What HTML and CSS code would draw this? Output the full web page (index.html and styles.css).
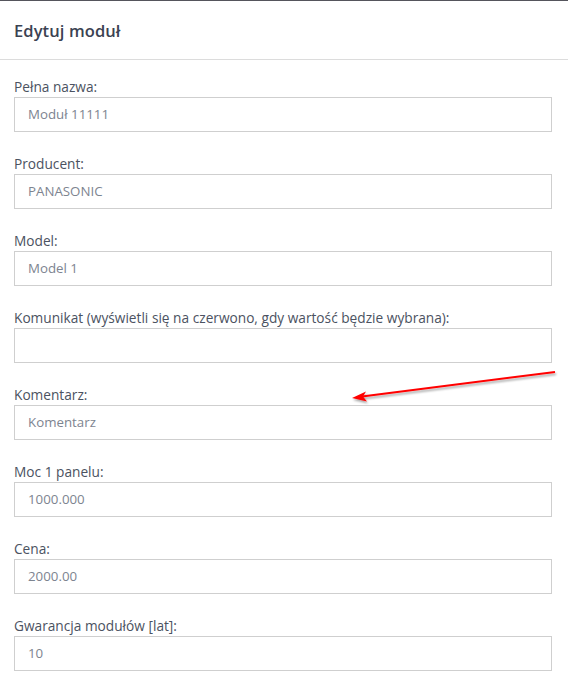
FILE: index.html
```html
<!DOCTYPE html>
<html lang="pl">
<head>
<meta charset="utf-8">
<title>Edytuj moduł</title>
<link rel="stylesheet" href="styles.css">
</head>
<body>
<div class="modal">
  <div class="modal-header">
    <h2 class="modal-title">Edytuj moduł</h2>
  </div>
  <div class="modal-body">
    <div class="field">
      <label class="field-label">Pełna nazwa:</label>
      <div class="field-input">Moduł 11111</div>
    </div>
    <div class="field">
      <label class="field-label">Producent:</label>
      <div class="field-input">PANASONIC</div>
    </div>
    <div class="field">
      <label class="field-label">Model:</label>
      <div class="field-input">Model 1</div>
    </div>
    <div class="field">
      <label class="field-label">Komunikat (wyświetli się na czerwono, gdy wartość będzie wybrana):</label>
      <div class="field-input"></div>
    </div>
    <div class="field">
      <label class="field-label">Komentarz:</label>
      <div class="field-input">Komentarz</div>
    </div>
    <div class="field">
      <label class="field-label">Moc 1 panelu:</label>
      <div class="field-input">1000.000</div>
    </div>
    <div class="field">
      <label class="field-label">Cena:</label>
      <div class="field-input">2000.00</div>
    </div>
    <div class="field">
      <label class="field-label">Gwarancja modułów [lat]:</label>
      <div class="field-input">10</div>
    </div>
  </div>
  <svg class="arrow" width="568" height="677" viewBox="0 0 568 677">
    <defs>
      <filter id="sh" x="-10%" y="-50%" width="120%" height="200%">
        <feDropShadow dx="1" dy="2" stdDeviation="1" flood-color="#000" flood-opacity="0.35"/>
      </filter>
    </defs>
    <g filter="url(#sh)">
      <line x1="555" y1="372" x2="362" y2="396.5" stroke="#ff0000" stroke-width="2"/>
      <polygon points="352,398 366,391.5 363,396.5 367,401.5" fill="#ff0000"/>
    </g>
  </svg>
</div>
</body>
</html>
```
FILE: styles.css
```css
html, body {
  margin: 0;
  padding: 0;
  background: #ffffff;
}
body {
  font-family: "Open Sans", "Noto Sans", "Liberation Sans", sans-serif;
  width: 568px;
  height: 677px;
  overflow: hidden;
}
.modal {
  position: relative;
  border-top: 1px solid #55555c;
  height: 676px;
  box-sizing: border-box;
}
.modal-header {
  height: 58px;
  border-bottom: 1px solid #dcdcdc;
  display: flex;
  align-items: center;
  padding: 0 14px;
}
.modal-title {
  margin: 0;
  font-size: 16.5px;
  font-weight: 600;
  color: #3b4252;
  letter-spacing: 0.1px;
}
.modal-body {
  padding: 17px 16px 0 14px;
  display: flex;
  flex-direction: column;
  gap: 22px;
}
.field {
  display: flex;
  flex-direction: column;
}
.field-label {
  height: 20px;
  font-size: 13.7px;
  line-height: 20px;
  color: #4b5261;
}
.field-input {
  height: 35px;
  box-sizing: border-box;
  border: 1px solid #cfcfcf;
  padding: 0 13px;
  font-size: 13.3px;
  line-height: 33px;
  color: #7d8490;
}
.arrow {
  position: absolute;
  left: 0;
  top: -1px;
  pointer-events: none;
}
```
